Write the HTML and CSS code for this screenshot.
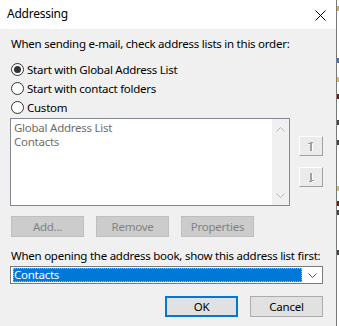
FILE: index.html
```html
<!DOCTYPE html>
<html>
<head>
  <meta charset="UTF-8">
  <title>Addressing</title>
  <link rel="stylesheet" href="styles.css">
</head>
<body>
  <div class="screen">
    <div class="dialog">
      <div class="titlebar">
        <span class="title">Addressing</span>
        <svg class="close" width="11" height="11" viewBox="0 0 11 11">
          <path d="M0.5 0.5 L10.5 10.5 M10.5 0.5 L0.5 10.5" stroke="#000" stroke-width="1" fill="none"/>
        </svg>
      </div>

      <div class="content">
        <div class="label">When sending e-mail, check address lists in this order:</div>

        <div class="radios">
          <div class="radio"><span class="circle checked"></span>Start with Global Address List</div>
          <div class="radio"><span class="circle"></span>Start with contact folders</div>
          <div class="radio"><span class="circle"></span>Custom</div>
        </div>

        <div class="list-row">
          <div class="listbox">
            <div class="list-items">
              <div class="list-item">Global Address List</div>
              <div class="list-item">Contacts</div>
            </div>
            <div class="scrollbar">
              <svg width="9" height="5" viewBox="0 0 9 5"><path d="M0.5 4.5 L4.5 0.5 L8.5 4.5" stroke="#b9b9b9" fill="none"/></svg>
              <svg width="9" height="5" viewBox="0 0 9 5"><path d="M0.5 0.5 L4.5 4.5 L8.5 0.5" stroke="#b9b9b9" fill="none"/></svg>
            </div>
          </div>
          <div class="move-buttons">
            <div class="move-btn">
              <svg width="8" height="11" viewBox="0 0 8 11">
                <path d="M3 1 H6 V2 H5 V10 H3 V3 H1 V2 H3 Z" fill="#a0a0a0"/>
                <path d="M5 10 H6 V3 H5 Z M1 3 H3 V4 H1 Z" fill="#fff"/>
              </svg>
            </div>
            <div class="move-btn">
              <svg width="8" height="11" viewBox="0 0 8 11">
                <path d="M3 1 H5 V8 H7 V9 H5 V10 H2 V9 H3 Z" fill="#a0a0a0"/>
                <path d="M5 2 H6 V8 H5 Z M5 9 H7 V10 H5 Z" fill="#fff"/>
              </svg>
            </div>
          </div>
        </div>

        <div class="actions">
          <div class="btn disabled">Add...</div>
          <div class="btn disabled">Remove</div>
          <div class="btn disabled">Properties</div>
        </div>

        <div class="label second">When opening the address book, show this address list first:</div>

        <div class="select">
          <div class="select-value"><span>Contacts</span></div>
          <svg class="chevron" width="9" height="5" viewBox="0 0 9 5"><path d="M0.5 0.5 L4.5 4.5 L8.5 0.5" stroke="#555" fill="none"/></svg>
        </div>

        <div class="footer">
          <div class="btn default">OK</div>
          <div class="btn">Cancel</div>
        </div>
      </div>
    </div>
    <div class="behind">
      <span class="bit" style="top: 6px; background: #c9b35a;"></span>
      <span class="bit" style="top: 58px; background: #3b78c4;"></span>
      <span class="bit" style="top: 77px; background: #d0c060;"></span>
      <span class="bit" style="top: 94px; background: #6b1a1a;"></span>
      <span class="bit" style="top: 120px; background: #444;"></span>
      <span class="bit" style="top: 140px; background: #444;"></span>
      <span class="bit" style="top: 186px; background: #d0c060;"></span>
      <span class="bit" style="top: 201px; background: #6b1a1a;"></span>
      <span class="bit" style="top: 210px; background: #444;"></span>
      <span class="bit" style="top: 250px; background: #444;"></span>
    </div>
  </div>
</body>
</html>
```

FILE: styles.css
```css
body {
  margin: 0;
  font-family: "Noto Sans", "Open Sans", sans-serif;
  font-size: 11.5px;
  letter-spacing: -0.25px;
  color: #000;
  background-color: #fff;
}

.screen {
  display: flex;
  width: 339px;
  height: 326px;
  overflow: hidden;
}

.dialog {
  width: 336px;
  flex-shrink: 0;
  display: flex;
  flex-direction: column;
  background-color: #f0f0f0;
  border-right: 1px solid #7a7a7a;
}

.titlebar {
  height: 29px;
  background-color: #fff;
  display: flex;
  align-items: center;
  justify-content: space-between;
  padding: 0 10px 0 7px;
}

.title {
  font-size: 12px;
  line-height: 16px;
  margin-top: -1px;
}

.close {
  display: block;
  margin-top: 1px;
}

.content {
  padding: 7px 13px 0 10px;
  display: flex;
  flex-direction: column;
}

.label {
  line-height: 16px;
  padding-left: 1px;
  white-space: nowrap;
}

.radios {
  margin-top: 8px;
  padding-left: 1px;
}

.radio {
  height: 19px;
  display: flex;
  align-items: center;
  white-space: nowrap;
}

.circle {
  width: 11px;
  height: 11px;
  border: 1px solid #333;
  border-radius: 50%;
  background-color: #fff;
  margin-right: 3px;
  display: flex;
  align-items: center;
  justify-content: center;
}

.circle.checked::after {
  content: "";
  width: 7px;
  height: 7px;
  border-radius: 50%;
  background-color: #333;
}

.list-row {
  display: flex;
  margin-top: 1px;
}

.listbox {
  width: 279px;
  height: 86px;
  border: 1px solid #828790;
  background-color: #fff;
  display: flex;
}

.list-items {
  flex-grow: 1;
  padding: 2px 3px;
  color: #6d6d6d;
}

.list-item {
  line-height: 14px;
}

.scrollbar {
  width: 17px;
  background-color: #f0f0f0;
  display: flex;
  flex-direction: column;
  justify-content: space-between;
  align-items: center;
  padding: 8px 0 7px;
}

.scrollbar svg {
  display: block;
}

.move-buttons {
  margin: 18px 0 0 9px;
  display: flex;
  flex-direction: column;
  gap: 11px;
}

.move-btn {
  width: 22px;
  height: 18px;
  border: 1px solid;
  border-color: #fff #a0a0a0 #a0a0a0 #fff;
  background-color: #ebebeb;
  display: flex;
  align-items: center;
  justify-content: center;
}

.move-btn svg {
  display: block;
}

.actions {
  display: flex;
  gap: 12px;
  margin-top: 10px;
  padding-left: 1px;
}

.btn {
  width: 71px;
  height: 19px;
  border: 1px solid #adadad;
  background-color: #e1e1e1;
  display: flex;
  align-items: center;
  justify-content: center;
  line-height: 16px;
}

.btn.disabled {
  background-color: #cccccc;
  border-color: #bfbfbf;
  color: #838383;
}

.btn.default {
  width: 69px;
  height: 17px;
  border: 2px solid #0078d7;
}

.label.second {
  margin-top: 11px;
}

.select {
  margin-top: 2px;
  height: 16px;
  border: 1px solid #7a7a7a;
  background-color: #fff;
  display: flex;
  align-items: center;
  padding: 0 5px 0 2px;
}

.select-value {
  flex-grow: 1;
  height: 14px;
  background-color: #0078d7;
  outline: 1px dotted #f7a23b;
  outline-offset: -1px;
  color: #fff;
  line-height: 14px;
  padding-left: 1px;
  margin-right: 6px;
}

.chevron {
  display: block;
}

.footer {
  display: flex;
  justify-content: flex-end;
  gap: 12px;
  margin-top: 12px;
}

.behind {
  position: relative;
  flex-grow: 1;
  background-color: #fff;
}

.bit {
  position: absolute;
  left: 0;
  width: 2px;
  height: 5px;
}
```
